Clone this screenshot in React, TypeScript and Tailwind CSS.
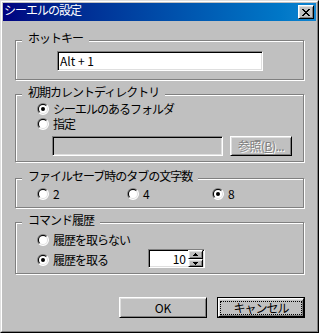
import React from "react";

const raised =
  "border border-t-white border-l-white border-r-black border-b-black shadow-[inset_1px_1px_0_#dfdfdf,inset_-1px_-1px_0_#808080]";
const sunken =
  "border border-t-[#808080] border-l-[#808080] border-r-white border-b-white shadow-[inset_1px_1px_0_#000000,inset_-1px_-1px_0_#dfdfdf]";

function Radio({ checked = false }: { checked?: boolean }) {
  return (
    <svg width="12" height="12" viewBox="0 0 12 12" className="block shrink-0">
      <path d="M1.757 10.243A6 6 0 0 1 10.243 1.757Z" fill="#808080" />
      <path d="M10.243 1.757A6 6 0 0 1 1.757 10.243Z" fill="#ffffff" />
      <path d="M2.464 9.536A5 5 0 0 1 9.536 2.464Z" fill="#000000" />
      <path d="M9.536 2.464A5 5 0 0 1 2.464 9.536Z" fill="#dfdfdf" />
      <circle cx="6" cy="6" r="4" fill="#ffffff" />
      {checked && <circle cx="6" cy="6" r="2" fill="#000000" />}
    </svg>
  );
}

function CloseX() {
  const px: [number, number, number][] = [
    [0, 0, 2], [6, 0, 2],
    [1, 1, 2], [5, 1, 2],
    [2, 2, 4],
    [3, 3, 2],
    [2, 4, 4],
    [1, 5, 2], [5, 5, 2],
    [0, 6, 2], [6, 6, 2],
  ];
  return (
    <svg width="8" height="7" viewBox="0 0 8 7" shapeRendering="crispEdges" className="block">
      {px.map(([x, y, w], i) => (
        <rect key={i} x={x} y={y} width={w} height={1} fill="#000" />
      ))}
    </svg>
  );
}

function Arrow({ up }: { up?: boolean }) {
  return (
    <svg width="5" height="3" viewBox="0 0 5 3" shapeRendering="crispEdges" className="block">
      {up ? (
        <>
          <rect x={2} y={0} width={1} height={1} fill="#000" />
          <rect x={1} y={1} width={3} height={1} fill="#000" />
          <rect x={0} y={2} width={5} height={1} fill="#000" />
        </>
      ) : (
        <>
          <rect x={0} y={0} width={5} height={1} fill="#000" />
          <rect x={1} y={1} width={3} height={1} fill="#000" />
          <rect x={2} y={2} width={1} height={1} fill="#000" />
        </>
      )}
    </svg>
  );
}

function Group({
  label,
  className,
  children,
}: {
  label: string;
  className: string;
  children: React.ReactNode;
}) {
  return (
    <div
      className={
        "relative w-[289px] border border-[#808080] shadow-[inset_1px_1px_0_#ffffff,1px_1px_0_#ffffff] " +
        className
      }
    >
      <span className="absolute left-[6px] top-[-9px] bg-[#c0c0c0] px-[6px] leading-[12px] tracking-[-1px] whitespace-nowrap">
        {label}
      </span>
      {children}
    </div>
  );
}

export default function App() {
  return (
    <div className="w-[319px] h-[333px] bg-[#c0c0c0] border border-t-[#dfdfdf] border-l-[#dfdfdf] border-r-black border-b-black text-[12px] leading-[12px] text-black font-['Noto_Sans_CJK_JP',sans-serif]">
      <div className="h-full border border-t-white border-l-white border-r-[#808080] border-b-[#808080] p-px">
        {/* title bar */}
        <div className="h-[18px] flex justify-between bg-linear-to-r from-[#000080] to-[#1084d0] pr-[2px]">
          <span className="pl-[1px] pt-[1px] text-white tracking-[-1px] whitespace-nowrap">
            シーエルの設定
          </span>
          <div className={"mt-[2px] w-[16px] h-[14px] bg-[#c0c0c0] flex items-center justify-center " + raised}>
            <CloseX />
          </div>
        </div>

        <div className="pl-[12px] flex flex-col">
          <Group label="ホットキー" className="mt-[19px] h-[40px] pt-[10px] pl-[41px]">
            <div className={"w-[206px] h-[20px] bg-white flex items-center pl-[2px] " + sunken}>
              Alt + 1
            </div>
          </Group>

          <Group label="初期カレントディレクトリ" className="mt-[14px] h-[68px] pt-[8px]">
            <div className="pl-[21px] h-[15px] flex items-start">
              <Radio checked />
              <span className="ml-[4px] tracking-[-1px] whitespace-nowrap">シーエルのあるフォルダ</span>
            </div>
            <div className="pl-[21px] h-[15px] flex items-start">
              <Radio />
              <span className="ml-[4px] tracking-[-1px]">指定</span>
            </div>
            <div className="mt-[3px] pl-[36px] flex gap-[7px]">
              <div className={"w-[171px] h-[20px] " + sunken} />
              <div
                className={
                  "w-[62px] h-[20px] flex items-center justify-center text-[#808080] [text-shadow:1px_1px_0_#ffffff] tracking-[-0.5px] whitespace-nowrap " +
                  raised
                }
              >
                参照(<span className="underline">B</span>)...
              </div>
            </div>
          </Group>

          <Group
            label="ファイルセーブ時のタブの文字数"
            className="mt-[16px] h-[30px] pt-[9px] pl-[21px] flex items-start"
          >
            <div className="w-[90px] flex items-start">
              <Radio />
              <span className="ml-[4px]">2</span>
            </div>
            <div className="w-[85px] flex items-start">
              <Radio />
              <span className="ml-[4px]">4</span>
            </div>
            <div className="flex items-start">
              <Radio checked />
              <span className="ml-[4px]">8</span>
            </div>
          </Group>

          <Group label="コマンド履歴" className="mt-[14px] h-[52px] pt-[11px] pl-[21px]">
            <div className="h-[20px] flex items-start">
              <Radio />
              <span className="ml-[4px] tracking-[-1px] whitespace-nowrap">履歴を取らない</span>
            </div>
            <div className="flex items-start">
              <div className="w-[111px] flex items-start">
                <Radio checked />
                <span className="ml-[4px] tracking-[-1px] whitespace-nowrap">履歴を取る</span>
              </div>
              <div className={"-mt-[5px] w-[57px] h-[19px] bg-white flex " + sunken}>
                <div className="flex-1 flex items-center justify-end pr-[2px]">10</div>
                <div className="w-[15px] mr-[1px] flex flex-col">
                  <div className={"h-[9px] bg-[#c0c0c0] flex items-center justify-center " + raised}>
                    <Arrow up />
                  </div>
                  <div className={"h-[8px] bg-[#c0c0c0] flex items-center justify-center " + raised}>
                    <Arrow />
                  </div>
                </div>
              </div>
            </div>
          </Group>

          <div className="mt-[23px] w-[290px] flex justify-end gap-[10px]">
            <div className={"w-[88px] h-[21px] flex items-center justify-center " + raised}>OK</div>
            <div className="w-[88px] h-[21px] border border-black flex">
              <div className={"flex-1 px-[1px] pt-[2px] pb-[1px] flex " + raised}>
                <div className="flex-1 border border-dotted border-black flex items-center justify-center tracking-[-1px] whitespace-nowrap">
                  キャンセル
                </div>
              </div>
            </div>
          </div>
        </div>
      </div>
    </div>
  );
}
